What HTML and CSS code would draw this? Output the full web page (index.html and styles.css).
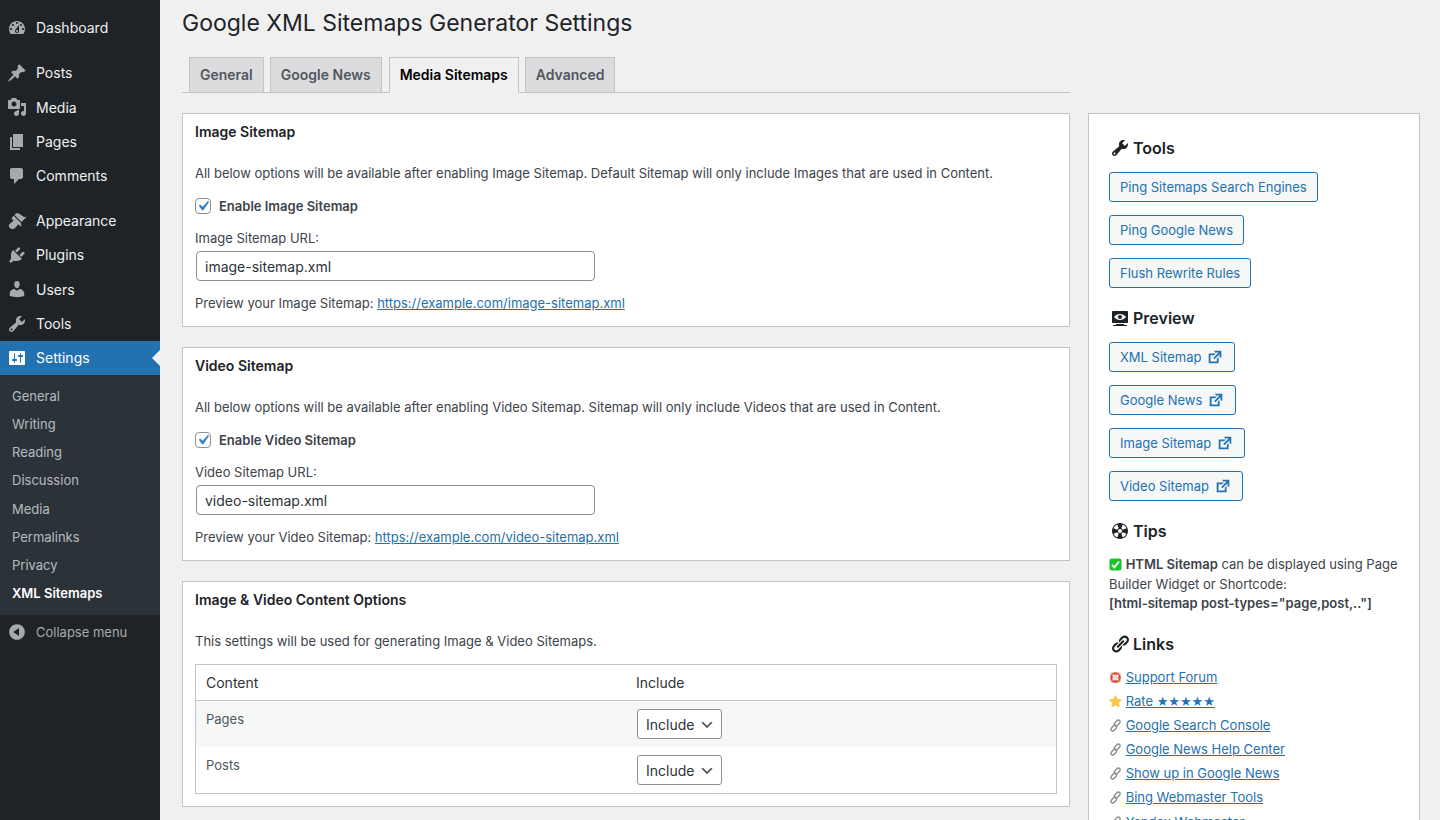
FILE: index.html
```html
<!DOCTYPE html>
<html lang="en">
<head>
<meta charset="utf-8">
<title>Google XML Sitemaps Generator Settings</title>
<link rel="stylesheet" href="styles.css">
</head>
<body>
<div class="shell">
<nav class="adminmenu">
  <ul class="menu">
    <li class="item"><svg class="mi" viewBox="0 0 20 20"><path fill-rule="evenodd" d="M3.76 16h12.48c1.1-1.37 1.76-3.11 1.76-5 0-4.42-3.58-8-8-8s-8 3.58-8 8c0 1.89.66 3.63 1.76 5zM10 4c.55 0 1 .45 1 1s-.45 1-1 1-1-.45-1-1 .45-1 1-1zM6 6c.55 0 1 .45 1 1s-.45 1-1 1-1-.45-1-1 .45-1 1-1zm8 0c.55 0 1 .45 1 1s-.45 1-1 1-1-.45-1-1 .45-1 1-1zm-5.37 5.55L12 7v6c0 1.1-.9 2-2 2s-2-.9-2-2c0-.57.24-1.08.63-1.45zM4 10c.55 0 1 .45 1 1s-.45 1-1 1-1-.45-1-1 .45-1 1-1zm12 0c.55 0 1 .45 1 1s-.45 1-1 1-1-.45-1-1 .45-1 1-1zm-5 3c0-.55-.45-1-1-1s-1 .45-1 1 .45 1 1 1 1-.45 1-1z"/></svg>Dashboard</li>
    <li class="sep"></li>
    <li class="item"><svg class="mi" viewBox="0 0 20 20"><path d="M10.44 3.02l1.82-1.82 6.36 6.35-1.83 1.82c-1.05-.68-2.48-.57-3.41.36l-.75.75c-.92.93-1.04 2.35-.35 3.41l-1.83 1.82-2.41-2.41-2.8 2.79c-.42.42-3.38 2.71-3.8 2.29s1.86-3.39 2.28-3.81l2.79-2.79L4.1 9.36l1.83-1.82c1.05.69 2.48.57 3.4-.36l.75-.75c.93-.92 1.05-2.35.36-3.41z"/></svg>Posts</li>
    <li class="item"><svg class="mi" viewBox="0 0 20 20"><path fill-rule="evenodd" d="M13 11V4c0-.55-.45-1-1-1h-1.67L9 1H5L3.67 3H2c-.55 0-1 .45-1 1v7c0 .55.45 1 1 1h10c.55 0 1-.45 1-1zM7 4.5c1.38 0 2.5 1.12 2.5 2.5S8.38 9.5 7 9.5 4.5 8.38 4.5 7 5.62 4.5 7 4.5zM14 6h5v10.5c0 1.38-1.12 2.5-2.5 2.5S14 17.88 14 16.5s1.12-2.5 2.5-2.5c.17 0 .34.02.5.05V9h-3V6zm-4 8.05V13h2v3.5c0 1.38-1.12 2.5-2.5 2.5S7 17.88 7 16.5 8.12 14 9.5 14c.17 0 .34.02.5.05z"/></svg>Media</li>
    <li class="item"><svg class="mi" viewBox="0 0 20 20"><path d="M6 15V2h10v13H6zm-1 1h8v2H3V5h2v11z"/></svg>Pages</li>
    <li class="item"><svg class="mi" viewBox="0 0 20 20"><path d="M5 2h9c1.1 0 2 .9 2 2v7c0 1.1-.9 2-2 2h-2l-5 5v-5H5c-1.1 0-2-.9-2-2V4c0-1.1.9-2 2-2z"/></svg>Comments</li>
    <li class="sep"></li>
    <li class="item"><svg class="mi" viewBox="0 0 20 20"><path d="M14.48 11.06L7.41 3.99l1.5-1.5c.5-.56 2.3-.47 3.51.32 1.21.8 1.43 1.28 2.91 2.1 1.18.64 2.45 1.26 4.45.85zm-.71.71L6.7 4.7 4.93 6.47c-.39.39-.39 1.02 0 1.41l1.06 1.06c.39.39.39 1.03 0 1.42-.6.6-1.43 1.11-2.21 1.69-.35.26-.7.53-1.01.84C1.43 13.25 1.43 15.67 2.9 17.1s3.85 1.48 5.28.02c.31-.31.58-.66.85-1.01.57-.79 1.08-1.61 1.69-2.21.39-.39 1.02-.39 1.41 0l1.06 1.06c.39.39 1.02.39 1.41 0z"/></svg>Appearance</li>
    <li class="item"><svg class="mi" viewBox="0 0 20 20"><path d="M13.11 4.36L9.87 7.6 8 5.73l3.24-3.24c.35-.34 1.05-.2 1.56.32.52.51.66 1.21.31 1.55zm-8 1.77l.91-1.12 9.01 9.01-1.19.84c-.71.71-2.63 1.16-3.82 1.16H6.14L4.9 17.26c-.59.59-1.54.59-2.12 0-.59-.58-.59-1.53 0-2.12l1.24-1.24v-3.88c0-1.13.4-3.19 1.09-3.89zm7.26 3.97l3.24-3.24c.34-.35 1.04-.21 1.55.31.52.51.66 1.21.31 1.55l-3.24 3.25z"/></svg>Plugins</li>
    <li class="item"><svg class="mi" viewBox="0 0 20 20"><path d="M10 9.25c-2.27 0-2.73-3.44-2.73-3.44C7 4.02 7.82 2 9.97 2c2.16 0 2.98 2.02 2.71 3.81 0 0-.41 3.44-2.68 3.44zm0 2.57L12.72 10c2.39 0 4.52 2.33 4.52 4.53v2.49s-3.65 1.13-7.24 1.13c-3.65 0-7.24-1.13-7.24-1.13v-2.49c0-2.25 1.94-4.48 4.47-4.48z"/></svg>Users</li>
    <li class="item"><svg class="mi" viewBox="0 0 20 20"><path fill-rule="evenodd" d="M16.68 9.77c-1.34 1.34-3.3 1.67-4.95.99l-5.41 6.52c-.99.99-2.59.99-3.58 0s-.99-2.59 0-3.57l6.52-5.42c-.68-1.65-.35-3.61.99-4.95 1.28-1.28 3.12-1.62 4.72-1.06l-2.89 2.89 2.82 2.82 2.86-2.87c.53 1.58.18 3.39-1.08 4.65zM3.81 16.21c.4.39 1.04.39 1.43 0 .4-.4.4-1.04 0-1.43-.39-.4-1.03-.4-1.43 0-.39.39-.39 1.03 0 1.43z"/></svg>Tools</li>
    <li class="item current"><svg class="mi" viewBox="0 0 20 20"><path fill-rule="evenodd" d="M18 16V4c0-.55-.45-1-1-1H3c-.55 0-1 .45-1 1v12c0 .55.45 1 1 1h14c.55 0 1-.45 1-1zM8 11h1c.55 0 1 .45 1 1s-.45 1-1 1H8v1.5c0 .28-.22.5-.5.5s-.5-.22-.5-.5V13H6c-.55 0-1-.45-1-1s.45-1 1-1h1V5.5c0-.28.22-.5.5-.5s.5.22.5.5V11zm5-2h-1c-.55 0-1-.45-1-1s.45-1 1-1h1V5.5c0-.28.22-.5.5-.5s.5.22.5.5V7h1c.55 0 1 .45 1 1s-.45 1-1 1h-1v5.5c0 .28-.22.5-.5.5s-.5-.22-.5-.5V9z"/></svg>Settings</li>
    <li class="submenu">
      <ul class="sublist">
        <li>General</li><li>Writing</li><li>Reading</li><li>Discussion</li><li>Media</li><li>Permalinks</li><li>Privacy</li><li class="subcurrent">XML Sitemaps</li>
      </ul>
    </li>
    <li class="collapse"><svg class="mi" viewBox="0 0 20 20"><path fill-rule="evenodd" d="M10 2.16c4.33 0 7.84 3.51 7.84 7.84s-3.51 7.84-7.84 7.84S2.16 14.33 2.16 10 5.71 2.16 10 2.16zm2 11.72V6.12L6.18 9.97z"/></svg>Collapse menu</li>
  </ul>
</nav>
<div class="content">
  <h1 class="title">Google XML Sitemaps Generator Settings</h1>
  <div class="tabs">
    <a class="tab">General</a><a class="tab">Google News</a><a class="tab active">Media Sitemaps</a><a class="tab">Advanced</a>
  </div>
  <div class="columns">
    <main class="main">
      <section class="card">
        <h3 class="card-title">Image Sitemap</h3>
        <p class="note">All below options will be available after enabling Image Sitemap. Default Sitemap will only include Images that are used in Content.</p>
        <label class="check"><span class="box"><svg viewBox="0 0 20 20"><path d="M14.83 4.89l1.34.94-5.81 8.38H9.02L5.78 9.67l1.34-1.25 2.57 2.4z"/></svg></span>Enable Image Sitemap</label>
        <div class="field-label">Image Sitemap URL:</div>
        <input class="url" type="text" value="image-sitemap.xml">
        <p class="preview">Preview your Image Sitemap: <a class="link">https://example.com/image-sitemap.xml</a></p>
      </section>
      <section class="card">
        <h3 class="card-title">Video Sitemap</h3>
        <p class="note">All below options will be available after enabling Video Sitemap. Sitemap will only include Videos that are used in Content.</p>
        <label class="check"><span class="box"><svg viewBox="0 0 20 20"><path d="M14.83 4.89l1.34.94-5.81 8.38H9.02L5.78 9.67l1.34-1.25 2.57 2.4z"/></svg></span>Enable Video Sitemap</label>
        <div class="field-label">Video Sitemap URL:</div>
        <input class="url" type="text" value="video-sitemap.xml">
        <p class="preview">Preview your Video Sitemap: <a class="link">https://example.com/video-sitemap.xml</a></p>
      </section>
      <section class="card card-table">
        <h3 class="card-title">Image &amp; Video Content Options</h3>
        <p class="note note-table">This settings will be used for generating Image &amp; Video Sitemaps.</p>
        <table class="opts">
          <thead><tr><th class="col-a">Content</th><th>Include</th></tr></thead>
          <tbody>
            <tr class="alt"><td>Pages</td><td><select class="sel"><option>Include</option></select></td></tr>
            <tr><td>Posts</td><td><select class="sel"><option>Include</option></select></td></tr>
          </tbody>
        </table>
      </section>
    </main>
    <aside class="side">
      <h3 class="side-title first"><svg class="si" viewBox="0 0 20 20"><path fill-rule="evenodd" d="M16.68 9.77c-1.34 1.34-3.3 1.67-4.95.99l-5.41 6.52c-.99.99-2.59.99-3.58 0s-.99-2.59 0-3.57l6.52-5.42c-.68-1.65-.35-3.61.99-4.95 1.28-1.28 3.12-1.62 4.72-1.06l-2.89 2.89 2.82 2.82 2.86-2.87c.53 1.58.18 3.39-1.08 4.65zM3.81 16.21c.4.39 1.04.39 1.43 0 .4-.4.4-1.04 0-1.43-.39-.4-1.03-.4-1.43 0-.39.39-.39 1.03 0 1.43z"/></svg>Tools</h3>
      <div class="btns">
        <a class="btn">Ping Sitemaps Search Engines</a>
        <a class="btn">Ping Google News</a>
        <a class="btn">Flush Rewrite Rules</a>
      </div>
      <h3 class="side-title"><svg class="si" viewBox="0 0 20 20"><path fill-rule="evenodd" d="M18 14V4c0-.55-.45-1-1-1H3c-.55 0-1 .45-1 1v10c0 .55.45 1 1 1h14c.55 0 1-.45 1-1zm-8-8c2.3 0 4.4 1.14 6 3-1.6 1.86-3.7 3-6 3s-4.4-1.14-6-3c1.6-1.86 3.7-3 6-3zm2 3c0-1.1-.9-2-2-2s-2 .9-2 2 .9 2 2 2 2-.9 2-2zm2 8h3v1H3v-1h3v-1h8v1z"/></svg>Preview</h3>
      <div class="btns">
        <a class="btn">XML Sitemap<svg class="ext" viewBox="0 0 20 20"><path d="M9 3h8v8l-2-1V6.92l-5.6 5.59-1.41-1.41L14.08 5H10zm3 12v-3l2-2v7H3V6h8L9 8H5v7h7z"/></svg></a>
        <a class="btn">Google News<svg class="ext" viewBox="0 0 20 20"><path d="M9 3h8v8l-2-1V6.92l-5.6 5.59-1.41-1.41L14.08 5H10zm3 12v-3l2-2v7H3V6h8L9 8H5v7h7z"/></svg></a>
        <a class="btn">Image Sitemap<svg class="ext" viewBox="0 0 20 20"><path d="M9 3h8v8l-2-1V6.92l-5.6 5.59-1.41-1.41L14.08 5H10zm3 12v-3l2-2v7H3V6h8L9 8H5v7h7z"/></svg></a>
        <a class="btn">Video Sitemap<svg class="ext" viewBox="0 0 20 20"><path d="M9 3h8v8l-2-1V6.92l-5.6 5.59-1.41-1.41L14.08 5H10zm3 12v-3l2-2v7H3V6h8L9 8H5v7h7z"/></svg></a>
      </div>
      <h3 class="side-title"><svg class="si" viewBox="0 0 20 20"><path fill-rule="evenodd" d="M18 10c0-4.42-3.58-8-8-8s-8 3.58-8 8 3.58 8 8 8 8-3.58 8-8zM7.23 3.57L8.72 7.3c-.62.29-1.13.8-1.42 1.42L3.57 7.23c.71-1.64 2.02-2.95 3.66-3.66zm9.2 3.66L12.7 8.72c-.29-.62-.8-1.13-1.42-1.42l1.49-3.73c1.64.71 2.95 2.02 3.66 3.66zM10 12c-1.1 0-2-.9-2-2s.9-2 2-2 2 .9 2 2-.9 2-2 2zm-6.43.77l3.73-1.49c.29.62.8 1.13 1.42 1.42l-1.49 3.73c-1.64-.71-2.95-2.02-3.66-3.66zm9.2 3.66l-1.49-3.73c.62-.29 1.13-.8 1.42-1.42l3.73 1.49c-.71 1.64-2.02 2.95-3.66 3.66z"/></svg>Tips</h3>
      <p class="tips"><svg class="emoji" viewBox="0 0 14 14"><rect x="0.5" y="0.5" width="13" height="13" rx="2.5" fill="#1fc12c"/><path d="M3.2 7.3l2.6 2.8 5-6.4" fill="none" stroke="#fff" stroke-width="1.9"/></svg> <b>HTML Sitemap</b> can be displayed using Page Builder Widget or Shortcode:<br><b>[html-sitemap post-types="page,post,.."]</b></p>
      <h3 class="side-title"><svg class="si" viewBox="0 0 20 20"><path fill-rule="evenodd" d="M17.74 2.76c1.68 1.69 1.68 4.41 0 6.1l-1.53 1.52c-1.12 1.12-2.7 1.47-4.14 1.09l2.62-2.61.76-.77.76-.76c.84-.84.84-2.2 0-3.04-.84-.85-2.2-.85-3.04 0l-.77.76-3.38 3.38c-.37-1.44-.02-3.02 1.1-4.14l1.52-1.53c1.69-1.68 4.42-1.68 6.1 0zM8.59 13.43l5.34-5.34c.42-.42.42-1.1 0-1.52-.44-.43-1.13-.39-1.53 0l-5.33 5.34c-.42.42-.42 1.1 0 1.52.44.43 1.13.39 1.52 0zm-.76 2.29l4.14-4.15c.38 1.44.03 3.02-1.09 4.14l-1.52 1.53c-1.69 1.68-4.41 1.68-6.1 0-1.68-1.68-1.68-4.42 0-6.1l1.53-1.52c1.12-1.12 2.7-1.47 4.14-1.1l-4.14 4.15c-.85.84-.85 2.2 0 3.05.84.84 2.2.84 3.04 0z"/></svg>Links</h3>
      <ul class="links">
        <li><svg class="emoji" viewBox="0 0 14 14"><rect x="1" y="1" width="12" height="12" rx="2" fill="#d9d9d9"/><circle cx="7" cy="7" r="4.4" fill="none" stroke="#e0492f" stroke-width="2.4"/><path d="M4 4l1.7 1.7M10 4L8.3 5.7M4 10l1.7-1.7M10 10L8.3 8.3" stroke="#f4f4f4" stroke-width="1.6"/></svg> <a class="link">Support Forum</a></li>
        <li><svg class="emoji" viewBox="0 0 14 14"><path d="M7 .6l1.95 4.1 4.5.6-3.3 3.1.85 4.5L7 10.7l-4 2.2.85-4.5L.55 5.3l4.5-.6z" fill="#fbc93d" stroke="#f0a92a" stroke-width=".5"/></svg> <a class="link">Rate <span class="stars">★★★★★</span></a></li>
        <li><svg class="emoji" viewBox="0 0 14 14"><g fill="none" stroke="#8a8f94" stroke-width="1.5"><rect x="0.2" y="5.1" width="7" height="3.8" rx="1.9" transform="rotate(-45 3.7 7) translate(-1 3)"/><rect x="6.8" y="5.1" width="7" height="3.8" rx="1.9" transform="rotate(-45 10.3 7) translate(1 -3)"/></g></svg> <a class="link">Google Search Console</a></li>
        <li><svg class="emoji" viewBox="0 0 14 14"><g fill="none" stroke="#8a8f94" stroke-width="1.5"><rect x="0.2" y="5.1" width="7" height="3.8" rx="1.9" transform="rotate(-45 3.7 7) translate(-1 3)"/><rect x="6.8" y="5.1" width="7" height="3.8" rx="1.9" transform="rotate(-45 10.3 7) translate(1 -3)"/></g></svg> <a class="link">Google News Help Center</a></li>
        <li><svg class="emoji" viewBox="0 0 14 14"><g fill="none" stroke="#8a8f94" stroke-width="1.5"><rect x="0.2" y="5.1" width="7" height="3.8" rx="1.9" transform="rotate(-45 3.7 7) translate(-1 3)"/><rect x="6.8" y="5.1" width="7" height="3.8" rx="1.9" transform="rotate(-45 10.3 7) translate(1 -3)"/></g></svg> <a class="link">Show up in Google News</a></li>
        <li><svg class="emoji" viewBox="0 0 14 14"><g fill="none" stroke="#8a8f94" stroke-width="1.5"><rect x="0.2" y="5.1" width="7" height="3.8" rx="1.9" transform="rotate(-45 3.7 7) translate(-1 3)"/><rect x="6.8" y="5.1" width="7" height="3.8" rx="1.9" transform="rotate(-45 10.3 7) translate(1 -3)"/></g></svg> <a class="link">Bing Webmaster Tools</a></li>
        <li><svg class="emoji" viewBox="0 0 14 14"><g fill="none" stroke="#8a8f94" stroke-width="1.5"><rect x="0.2" y="5.1" width="7" height="3.8" rx="1.9" transform="rotate(-45 3.7 7) translate(-1 3)"/><rect x="6.8" y="5.1" width="7" height="3.8" rx="1.9" transform="rotate(-45 10.3 7) translate(1 -3)"/></g></svg> <a class="link">Yandex Webmaster</a></li>
      </ul>
    </aside>
  </div>
</div>
</div>
</body>
</html>
```
FILE: styles.css
```css
* { box-sizing: border-box; }
html, body { margin: 0; height: 100%; overflow: hidden; }
body { background: #f0f0f1; color: #3c434a; font: 13px/1.4 Inter, "Noto Sans", sans-serif; }
ul { list-style: none; margin: 0; padding: 0; }
.shell { display: flex; height: 820px; overflow: hidden; }

.adminmenu { flex: 0 0 160px; background: #1d2327; padding-top: 11px; }
.item, .collapse { display: flex; align-items: center; height: 34.2px; font-size: 14px; color: #f0f0f1; padding-left: 7px; }
.mi { flex: 0 0 20px; width: 20px; height: 20px; margin-right: 9px; fill: #a7aaad; }
.sep { height: 11px; }
.current { background: #2271b1; color: #fff; position: relative; }
.current .mi { fill: #fff; }
.current::after { content: ""; position: absolute; right: 0; top: 9px; border: 8px solid transparent; border-right-color: #f0f0f1; border-left-width: 0; }
.submenu { background: #2c3338; padding: 7px 0; height: 240px; }
.sublist li { height: 28.2px; line-height: 28.2px; padding-left: 12px; color: rgba(240, 246, 252, .7); font-size: 13px; }
.sublist .subcurrent { color: #fff; font-weight: 600; }
.collapse { color: #a7aaad; font-size: 13px; margin-top: 0; }

.content { flex: 1; padding-left: 22px; min-width: 0; }
.title { margin: 0; font-size: 23px; font-weight: 400; line-height: 29px; padding-top: 9px; color: #1d2327; }
.tabs { width: 888px; height: 55px; padding: 19px 0 0 7px; border-bottom: 1px solid #c3c4c7; display: flex; gap: 6px; }
.tab { height: 36px; padding: 0 10px; border: 1px solid #c3c4c7; background: #dcdcde; color: #50575e; font-size: 14px; font-weight: 600; line-height: 34px; }
.active { background: #f0f0f1; color: #000; border-bottom-color: #f0f0f1; margin-left: 1px; }
.columns { display: flex; gap: 18px; margin-top: 20px; align-items: flex-start; }
.main { width: 888px; display: flex; flex-direction: column; gap: 20px; }
.card { background: #fff; border: 1px solid #c3c4c7; padding: 0 12px; height: 214px; }
.card-table { height: 226px; }
.card-title { margin: 0; font-size: 14px; font-weight: 600; color: #1d2327; line-height: 20px; padding-top: 8px; }
.note { margin: 0; padding-top: 22px; line-height: 18px; }
.note-table { padding-top: 22px; }
.check { display: flex; align-items: center; font-weight: 600; height: 16px; margin-top: 16px; }
.box { width: 16px; height: 16px; border: 1px solid #8c8f94; border-radius: 4px; background: #fff; margin-right: 8px; display: flex; align-items: center; justify-content: center; }
.box svg { width: 20px; height: 20px; fill: #3582c4; flex: none; }
.field-label { margin-top: 15px; line-height: 18px; }
.url { display: block; width: 399px; height: 30px; margin: 4px 0 0 1px; padding: 0 8px; border: 1px solid #8c8f94; border-radius: 4px; background: #fff; color: #2c3338; font: 14px Inter, "Noto Sans", sans-serif; }
.preview { margin: 13px 0 0; line-height: 18px; }
.link { color: #2271b1; text-decoration: underline; }

.opts { width: 100%; margin-top: 14px; border: 1px solid #c3c4c7; border-collapse: separate; border-spacing: 0; table-layout: fixed; }
.opts th { height: 36px; padding: 0 10px; text-align: left; font-size: 14px; font-weight: 400; color: #2c3338; border-bottom: 1px solid #c3c4c7; }
.opts td { height: 46px; padding: 8px 10px; vertical-align: top; color: #50575e; line-height: 20px; }
.col-a { width: 430px; }
.alt td { background: #f6f7f7; }
.sel { display: block; appearance: none; -webkit-appearance: none; width: 85px; height: 30px; margin-left: 1px; padding: 0 24px 0 8px; border: 1px solid #8c8f94; border-radius: 3px; color: #2c3338; font: 14px Inter, "Noto Sans", sans-serif; background: #fff url("data:image/svg+xml,%3Csvg xmlns='http://www.w3.org/2000/svg' width='20' height='20'%3E%3Cpath d='M5 6l5 5 5-5 2 1-7 7-7-7 2-1z' fill='%23555'/%3E%3C/svg%3E") no-repeat right 6px top 55%; background-size: 16px 16px; }

.side { width: 332px; height: 820px; background: #fff; border: 1px solid #c3c4c7; padding: 0 20px; }
.side-title { display: flex; align-items: center; margin: 19px 0 0 1px; font-size: 16px; font-weight: 600; color: #1d2327; line-height: 22px; }
.first { margin-top: 23px; }
.si { width: 20px; height: 20px; margin-right: 3px; fill: #1d2327; flex: none; }
.btns { display: flex; flex-direction: column; align-items: flex-start; gap: 13px; margin-top: 13px; }
.btn { display: flex; align-items: center; height: 30px; padding: 0 10px; border: 1px solid #2271b1; border-radius: 3px; background: #f6f7f7; color: #2271b1; }
.ext { width: 18px; height: 18px; margin-left: 5px; fill: #2271b1; }
.tips { margin: 13px 0 0; line-height: 19.5px; }
.tips b { font-weight: 600; }
.emoji { width: 13px; height: 13px; vertical-align: -2px; }
.links { margin-top: 10px; }
.links li { height: 24.2px; line-height: 24.2px; }
.stars { font-family: "DejaVu Sans", sans-serif; }
```
